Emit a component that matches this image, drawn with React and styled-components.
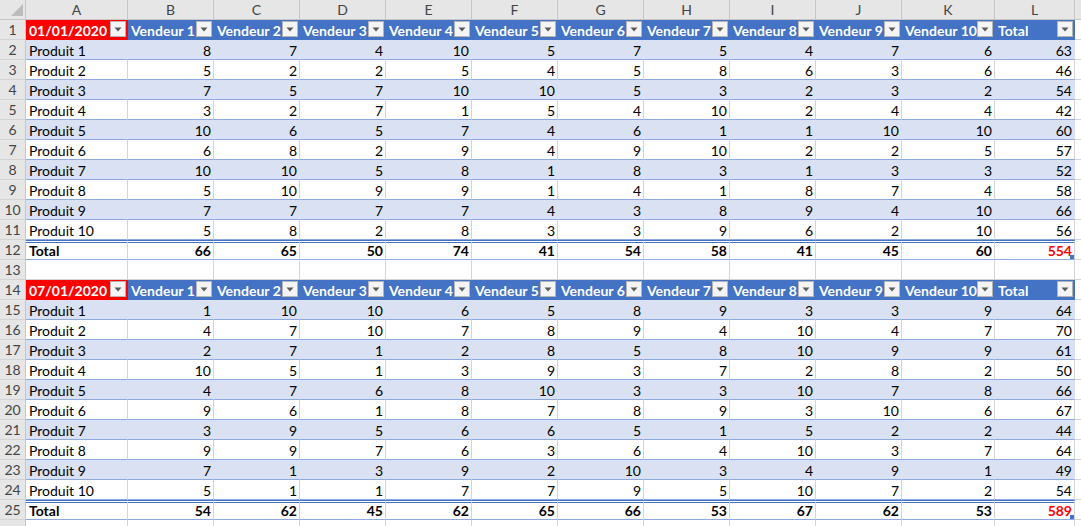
import React from 'react';
import styled, { createGlobalStyle, css } from 'styled-components';

const GlobalStyle = createGlobalStyle`
  html, body { margin: 0; padding: 0; background: #fff; overflow: hidden; }
  body { font-family: Lato, "Noto Sans", sans-serif; }
  * { box-sizing: border-box; }
`;

const LETTERS = ['A', 'B', 'C', 'D', 'E', 'F', 'G', 'H', 'I', 'J', 'K', 'L', 'M'];

const tables = [
  {
    date: '01/01/2020',
    rows: [
      [8, 7, 4, 10, 5, 7, 5, 4, 7, 6, 63],
      [5, 2, 2, 5, 4, 5, 8, 6, 3, 6, 46],
      [7, 5, 7, 10, 10, 5, 3, 2, 3, 2, 54],
      [3, 2, 7, 1, 5, 4, 10, 2, 4, 4, 42],
      [10, 6, 5, 7, 4, 6, 1, 1, 10, 10, 60],
      [6, 8, 2, 9, 4, 9, 10, 2, 2, 5, 57],
      [10, 10, 5, 8, 1, 8, 3, 1, 3, 3, 52],
      [5, 10, 9, 9, 1, 4, 1, 8, 7, 4, 58],
      [7, 7, 7, 7, 4, 3, 8, 9, 4, 10, 66],
      [5, 8, 2, 8, 3, 3, 9, 6, 2, 10, 56],
    ],
    total: [66, 65, 50, 74, 41, 54, 58, 41, 45, 60, 554],
  },
  {
    date: '07/01/2020',
    rows: [
      [1, 10, 10, 6, 5, 8, 9, 3, 3, 9, 64],
      [4, 7, 10, 7, 8, 9, 4, 10, 4, 7, 70],
      [2, 7, 1, 2, 8, 5, 8, 10, 9, 9, 61],
      [10, 5, 1, 3, 9, 3, 7, 2, 8, 2, 50],
      [4, 7, 6, 8, 10, 3, 3, 10, 7, 8, 66],
      [9, 6, 1, 8, 7, 8, 9, 3, 10, 6, 67],
      [3, 9, 5, 6, 6, 5, 1, 5, 2, 2, 44],
      [9, 9, 7, 6, 3, 6, 4, 10, 3, 7, 64],
      [7, 1, 3, 9, 2, 10, 3, 4, 9, 1, 49],
      [5, 1, 1, 7, 7, 9, 5, 10, 7, 2, 54],
    ],
    total: [54, 62, 45, 62, 65, 66, 53, 67, 62, 53, 589],
  },
];

const Sheet = styled.div`
  display: grid;
  grid-template-columns: 26px 102px repeat(9, 86px) 93px 80px 64px;
  grid-auto-rows: 20px;
  width: 1081px;
  height: 526px;
  overflow: hidden;
  font-size: 14px;
  color: #000;
`;

const HeadBase = styled.div`
  background: #e6e6e6;
  color: #444;
  border-right: 1px solid #c6c6c6;
  border-bottom: 1px solid #c6c6c6;
  text-align: center;
  line-height: 19px;
  font-size: 14px;
  overflow: hidden;
  white-space: nowrap;
`;

const Corner = styled(HeadBase)`
  display: flex;
  align-items: flex-end;
  justify-content: flex-end;
  padding: 0 1px 2px 0;
`;

const ColHead = styled(HeadBase)``;

const RowHead = styled(HeadBase)`
  border-bottom-color: #d4d4d4;
`;

const variants = {
  empty: css`
    background: #fff;
    border-right: 1px solid #d4d4d4;
    border-bottom: 1px solid #d4d4d4;
  `,
  head: css`
    background: #4472c4;
    color: #fff;
    font-weight: 700;
    border-right: 1px solid #4472c4;
    border-bottom: 1px solid #4472c4;
  `,
  date: css`
    background: #ff0000;
    color: #fff;
    font-weight: 700;
    border-right: 1px solid #ff0000;
    border-bottom: 1px solid #ff0000;
  `,
  band: css`
    background: #d9e1f2;
    border-right: 1px solid #d9e1f2;
    border-bottom: 1px solid #8ea9db;
  `,
  plain: css`
    background: #fff;
    border-right: 1px solid #d4d4d4;
    border-bottom: 1px solid #8ea9db;
  `,
  total: css`
    background: #fff;
    font-weight: 700;
    border-top: 3px double #4472c4;
    border-right: 1px solid #d4d4d4;
    border-bottom: 1px solid #8ea9db;
    line-height: 15px;
  `,
};

const Cell = styled.div`
  position: relative;
  overflow: hidden;
  white-space: nowrap;
  line-height: 21px;
  padding: 0 2px 0 3px;
  text-align: ${(p) => (p.$right ? 'right' : 'left')};
  ${(p) => variants[p.$v || 'empty']}
  ${(p) => p.$red && css`color: #ff0000;`}
`;

const HeaderCell = styled(Cell)`
  display: flex;
  align-items: flex-start;
  justify-content: space-between;
  padding: 0 0 0 3px;
`;

const Label = styled.span`
  overflow: hidden;
  line-height: 21px;
`;

const FilterButton = styled.span`
  flex: 0 0 16px;
  width: 16px;
  height: 16px;
  margin: 1px 1px 0 0;
  background: #f4f4f4;
  border: 1px solid #b4b4b4;
  display: flex;
  align-items: center;
  justify-content: center;
`;

const Handle = styled.span`
  position: absolute;
  right: 0;
  bottom: 0;
  width: 4px;
  height: 4px;
  background: #4472c4;
`;

const Arrow = () => (
  <svg width="8" height="5" viewBox="0 0 8 5">
    <path d="M0.5 0.5 L7.5 0.5 L4 4.5 Z" fill="#5a5a5a" />
  </svg>
);

const CornerTriangle = () => (
  <svg width="14" height="14" viewBox="0 0 14 14">
    <path d="M13 1 L13 13 L1 13 Z" fill="#bcbcbc" />
  </svg>
);

function EmptyRow({ n }) {
  return (
    <>
      <RowHead>{n}</RowHead>
      {LETTERS.map((l) => (
        <Cell key={l} $v="empty" />
      ))}
    </>
  );
}

function Table({ data, start }) {
  const vendeurs = Array.from({ length: 10 }, (_, i) => `Vendeur ${i + 1}`);
  return (
    <>
      <RowHead>{start}</RowHead>
      <HeaderCell $v="date">
        <Label>{data.date}</Label>
        <FilterButton><Arrow /></FilterButton>
      </HeaderCell>
      {vendeurs.map((v) => (
        <HeaderCell key={v} $v="head">
          <Label>{v}</Label>
          <FilterButton><Arrow /></FilterButton>
        </HeaderCell>
      ))}
      <HeaderCell $v="head">
        <Label>Total</Label>
        <FilterButton><Arrow /></FilterButton>
      </HeaderCell>
      <Cell $v="empty" />
      {data.rows.map((r, i) => {
        const v = i % 2 === 0 ? 'band' : 'plain';
        return (
          <React.Fragment key={i}>
            <RowHead>{start + 1 + i}</RowHead>
            <Cell $v={v}>Produit {i + 1}</Cell>
            {r.map((x, j) => (
              <Cell key={j} $v={v} $right>{x}</Cell>
            ))}
            <Cell $v="empty" />
          </React.Fragment>
        );
      })}
      <RowHead>{start + 11}</RowHead>
      <Cell $v="total">Total</Cell>
      {data.total.map((x, j) => (
        <Cell key={j} $v="total" $right $red={j === 10}>
          {x}
          {j === 10 && <Handle />}
        </Cell>
      ))}
      <Cell $v="empty" />
    </>
  );
}

export default function App() {
  return (
    <>
      <GlobalStyle />
      <Sheet>
        <Corner><CornerTriangle /></Corner>
        {LETTERS.map((l) => (
          <ColHead key={l}>{l === 'M' ? '' : l}</ColHead>
        ))}
        <Table data={tables[0]} start={1} />
        <EmptyRow n={13} />
        <Table data={tables[1]} start={14} />
        <EmptyRow n="" />
      </Sheet>
    </>
  );
}
